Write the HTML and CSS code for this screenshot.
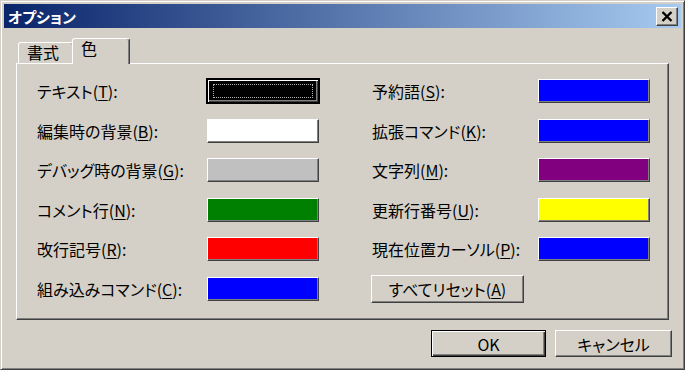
FILE: index.html
```html
<!DOCTYPE html>
<html lang="ja">
<head>
    <meta charset="UTF-8">
    <meta name="viewport" content="width=device-width, initial-scale=1.0">
    <title>オプション</title>
<link rel="stylesheet" href="styles.css">
</head>
<body>
    <div class="window">
        <div class="title-bar">
            <span class="title">オプション</span>
            <button class="close-button" aria-label="閉じる">
                <svg width="12" height="11" viewBox="0 0 12 11">
                    <path d="M1.5 1 L10.5 10 M10.5 1 L1.5 10" stroke="#000" stroke-width="2.4" fill="none"/>
                </svg>
            </button>
        </div>

        <div class="dialog-body">
            <div class="tabs">
                <div class="tab">書式</div>
                <div class="tab selected">色</div>
            </div>

            <div class="panel">
                <!-- left column -->
                <div class="column left">
                    <div class="row">
                        <span class="label">テキスト(<u>T</u>):</span>
                        <button class="swatch swatch-black focused"></button>
                    </div>
                    <div class="row">
                        <span class="label">編集時の背景(<u>B</u>):</span>
                        <button class="swatch swatch-white"></button>
                    </div>
                    <div class="row">
                        <span class="label">デバッグ時の背景(<u>G</u>):</span>
                        <button class="swatch swatch-gray"></button>
                    </div>
                    <div class="row">
                        <span class="label">コメント行(<u>N</u>):</span>
                        <button class="swatch swatch-green"></button>
                    </div>
                    <div class="row">
                        <span class="label">改行記号(<u>R</u>):</span>
                        <button class="swatch swatch-red"></button>
                    </div>
                    <div class="row">
                        <span class="label">組み込みコマンド(<u>C</u>):</span>
                        <button class="swatch swatch-blue"></button>
                    </div>
                </div>

                <!-- right column -->
                <div class="column right">
                    <div class="row">
                        <span class="label">予約語(<u>S</u>):</span>
                        <button class="swatch swatch-blue"></button>
                    </div>
                    <div class="row">
                        <span class="label">拡張コマンド(<u>K</u>):</span>
                        <button class="swatch swatch-blue"></button>
                    </div>
                    <div class="row">
                        <span class="label">文字列(<u>M</u>):</span>
                        <button class="swatch swatch-purple"></button>
                    </div>
                    <div class="row">
                        <span class="label">更新行番号(<u>U</u>):</span>
                        <button class="swatch swatch-yellow"></button>
                    </div>
                    <div class="row">
                        <span class="label">現在位置カーソル(<u>P</u>):</span>
                        <button class="swatch swatch-blue"></button>
                    </div>
                    <div class="row">
                        <button class="button reset-button">すべてリセット(<u>A</u>)</button>
                    </div>
                </div>
            </div>

            <div class="footer">
                <button class="button default ok-button">OK</button>
                <button class="button cancel-button">キャンセル</button>
            </div>
        </div>
    </div>
</body>
</html>
```

FILE: styles.css
```css
body {
    margin: 0;
    background: #ffffff;
    font-family: "Noto Sans CJK JP", "Liberation Sans", sans-serif;
    font-feature-settings: "palt";
    color: #000;
}

.window {
    width: 685px;
    height: 370px;
    box-sizing: border-box;
    background: #d4d0c8;
    border: 1px solid;
    border-color: #d4d0c8 #404040 #404040 #d4d0c8;
    box-shadow: inset 1px 1px #ffffff, inset -1px -1px #808080;
    padding: 3px;
    display: flex;
    flex-direction: column;
}

.title-bar {
    height: 24px;
    flex-shrink: 0;
    background: linear-gradient(to right, #0a246a, #a6caf0);
    display: flex;
    align-items: center;
    justify-content: space-between;
    padding: 0 3px 0 4px;
}

.title {
    color: #ffffff;
    font-weight: bold;
    font-size: 15px;
    line-height: 1;
}

.close-button {
    width: 22px;
    height: 19px;
    padding: 0;
    background: #d4d0c8;
    border: 1px solid;
    border-color: #ffffff #404040 #404040 #ffffff;
    box-shadow: inset -1px -1px #808080;
    display: flex;
    align-items: center;
    justify-content: center;
}

.dialog-body {
    padding: 10px 12px 0 12px;
    display: flex;
    flex-direction: column;
}

.tabs {
    height: 25px;
    display: flex;
    align-items: flex-end;
    padding-left: 2px;
}

.tab {
    width: 56px;
    height: 21px;
    box-sizing: border-box;
    border: 1px solid;
    border-bottom: none;
    border-color: #ffffff #404040 transparent #ffffff;
    border-radius: 3px 3px 0 0;
    box-shadow: inset -1px 0 #808080;
    font-size: 16px;
    line-height: 19px;
    padding-left: 8px;
}

.tab.selected {
    width: 58px;
    height: 26px;
    margin-left: -2px;
    margin-bottom: -1px;
    line-height: 18px;
    background: #d4d0c8;
    position: relative;
    z-index: 1;
}

.panel {
    height: 257px;
    box-sizing: border-box;
    border: 1px solid;
    border-color: #ffffff #404040 #404040 #ffffff;
    box-shadow: inset -1px -1px #808080;
    padding: 15px 0 0 20px;
    display: flex;
    gap: 53px;
}

.column {
    display: flex;
    flex-direction: column;
    gap: 15.6px;
}

.row {
    height: 24px;
    display: flex;
    align-items: center;
}

.label {
    font-size: 16px;
    white-space: nowrap;
}

.left .label {
    width: 170px;
}

.right .label {
    width: 166px;
}

u {
    text-underline-offset: 2px;
}

.swatch {
    width: 112px;
    height: 24px;
    padding: 0;
    border: 1px solid;
    border-color: #ffffff #404040 #404040 #ffffff;
    box-shadow: inset -1px -1px #808080;
}

.swatch-black { background: #000000; }
.swatch-white { background: #ffffff; }
.swatch-gray { background: #c0c0c0; }
.swatch-green { background: #008000; }
.swatch-red { background: #ff0000; }
.swatch-blue { background: #0000ff; }
.swatch-purple { background: #800080; }
.swatch-yellow { background: #ffff00; }

.swatch.focused {
    position: relative;
    border-color: #000000;
    outline: 1px solid #000000;
    box-shadow: inset 1px 1px #ffffff, inset -1px -1px #404040, inset -2px -2px #808080;
}

.swatch.focused::after {
    content: "";
    position: absolute;
    top: 4px;
    left: 5px;
    right: 5px;
    bottom: 4px;
    border: 1px dotted #b0b0b0;
}

.button {
    font-family: inherit;
    font-feature-settings: "palt";
    font-size: 16px;
    color: #000;
    background: #d4d0c8;
    padding: 0;
    border: 1px solid;
    border-color: #ffffff #404040 #404040 #ffffff;
    box-shadow: inset -1px -1px #808080;
}

.button.default {
    border-color: #000000;
    box-shadow: inset 1px 1px #ffffff, inset -1px -1px #404040, inset -2px -2px #808080;
}

.reset-button {
    width: 153px;
    height: 28px;
    margin-left: -1px;
}

.footer {
    margin-top: 10px;
    margin-right: -3px;
    display: flex;
    justify-content: flex-end;
    gap: 9px;
}

.ok-button {
    width: 115px;
    height: 27px;
}

.cancel-button {
    width: 117px;
    height: 27px;
}
```
